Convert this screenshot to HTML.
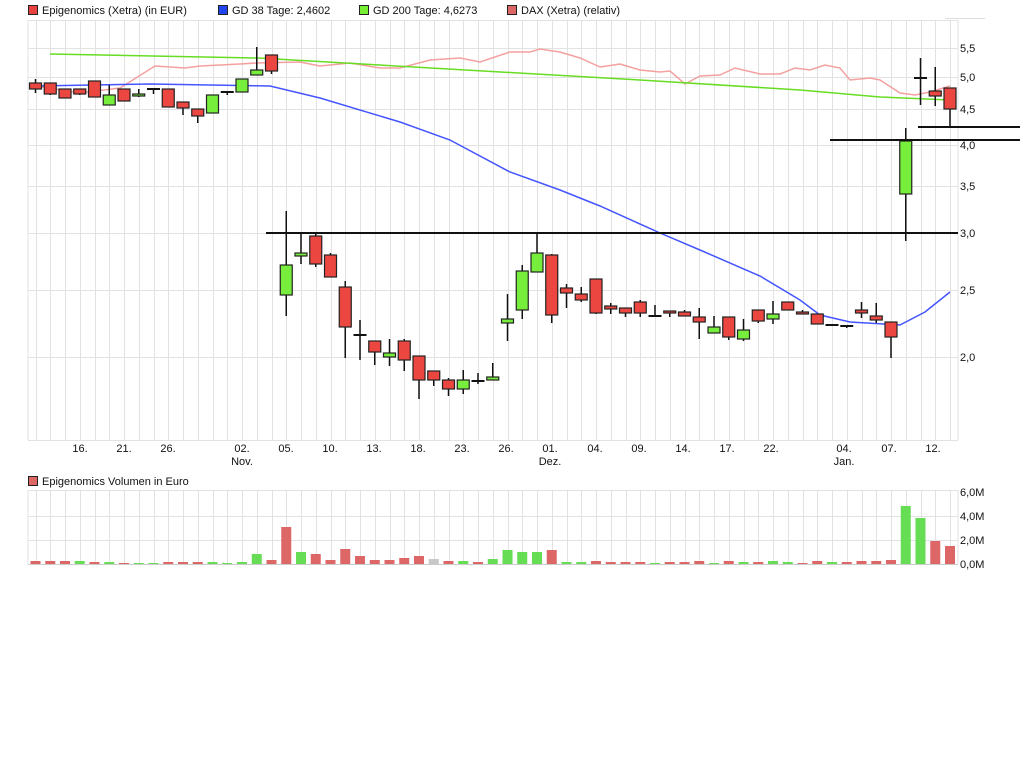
<!DOCTYPE html>
<html><head><meta charset="utf-8">
<style>
html,body{margin:0;padding:0;background:#fff;width:1024px;height:768px;overflow:hidden}
svg{display:block}
text{font-family:"Liberation Sans",sans-serif;font-size:11px;fill:#111}
</style></head><body>
<svg id="s" width="1024" height="768" xmlns="http://www.w3.org/2000/svg">
<g id="grid"></g>
<!-- legend -->
<rect x="28.5" y="5.5" width="9" height="9" fill="#e8443f" stroke="#222"/>
<text x="42" y="14">Epigenomics (Xetra) (in EUR)</text>
<rect x="218.5" y="5.5" width="9" height="9" fill="#2244ee" stroke="#222"/>
<text x="232" y="14">GD 38 Tage: 2,4602</text>
<rect x="359.5" y="5.5" width="9" height="9" fill="#77ee33" stroke="#222"/>
<text x="373" y="14">GD 200 Tage: 4,6273</text>
<rect x="507.5" y="5.5" width="9" height="9" fill="#dd6666" stroke="#222"/>
<text x="521" y="14">DAX (Xetra) (relativ)</text>
<line x1="945" y1="18.5" x2="985" y2="18.5" stroke="#ddd"/>
<!-- right axis -->
<text x="960" y="52">5,5</text><text x="960" y="81">5,0</text><text x="960" y="113">4,5</text>
<text x="960" y="149">4,0</text><text x="960" y="190">3,5</text><text x="960" y="237">3,0</text>
<text x="960" y="294">2,5</text><text x="960" y="361">2,0</text>
<!-- dates -->
<g text-anchor="middle">
<text x="80" y="452">16.</text><text x="124" y="452">21.</text><text x="168" y="452">26.</text>
<text x="242" y="452">02.</text><text x="242" y="465">Nov.</text>
<text x="286" y="452">05.</text><text x="330" y="452">10.</text><text x="374" y="452">13.</text>
<text x="418" y="452">18.</text><text x="462" y="452">23.</text><text x="506" y="452">26.</text>
<text x="550" y="452">01.</text><text x="550" y="465">Dez.</text>
<text x="595" y="452">04.</text><text x="639" y="452">09.</text><text x="683" y="452">14.</text>
<text x="727" y="452">17.</text><text x="771" y="452">22.</text>
<text x="844" y="452">04.</text><text x="844" y="465">Jan.</text>
<text x="889" y="452">07.</text><text x="933" y="452">12.</text>
</g>
<rect x="28.5" y="476.5" width="9" height="9" fill="#dd6666" stroke="#222"/>
<text x="42" y="485">Epigenomics Volumen in Euro</text>
<text x="960" y="496">6,0M</text><text x="960" y="520">4,0M</text><text x="960" y="544">2,0M</text><text x="960" y="568">0,0M</text>
<!-- MAs -->
<polyline fill="none" stroke="#f4a0a0" stroke-width="1.5" points="36,86 80,93 120,88 155,66 185,68 200,66 240,64 256,63 300,62 320,66 350,63 380,68 400,68 430,60 460,58 480,62 510,52 530,52 540,49 560,52 580,58 600,67 620,64 640,70 660,72 670,71 685,84 700,76 720,75 735,68 760,74 780,74 795,68 810,70 825,65 840,68 850,80 870,78 880,80 900,93 915,95 930,92 950,86"/>
<polyline fill="none" stroke="#66dd22" stroke-width="1.5" points="50,54 258,58 640,80 800,90 880,97 950,100"/>
<polyline fill="none" stroke="#4455ff" stroke-width="1.5" points="36,86 150,84 270,86 320,98 400,122 450,140 510,172 560,190 600,206 660,233 700,250 760,276 800,300 820,315 850,322 900,325 925,312 950,292"/>
<g id="c"></g>
<line x1="266" y1="233" x2="958" y2="233" stroke="#111" stroke-width="2"/>
<line x1="830" y1="140" x2="1020" y2="140" stroke="#111" stroke-width="2"/>
<line x1="918" y1="127" x2="1020" y2="127" stroke="#111" stroke-width="2"/>
</svg>
<script>
var NS="http://www.w3.org/2000/svg";
function el(p,t,a){var e=document.createElementNS(NS,t);for(var k in a)e.setAttribute(k,a[k]);p.appendChild(e);return e;}
var g=document.getElementById("grid"),c=document.getElementById("c");
function X(i){return 35.5+i*14.75;}
// grid
var xs=[28,958];for(var i=0;i<63;i++)xs.push(Math.round(X(i))+.5);
xs.forEach(function(x){el(g,"line",{x1:x,y1:20,x2:x,y2:440,stroke:"#e2e2e2"});el(g,"line",{x1:x,y1:490,x2:x,y2:564,stroke:"#e2e2e2"});});
[20,48,77,109,145,186,233,290,357,440].forEach(function(y){el(g,"line",{x1:28,y1:y+.5,x2:958,y2:y+.5,stroke:"#e2e2e2"});});
[490,516,540].forEach(function(y){el(g,"line",{x1:28,y1:y+.5,x2:958,y2:y+.5,stroke:"#e2e2e2"});});
el(g,"line",{x1:28,y1:564.5,x2:958,y2:564.5,stroke:"#ccc"});
// candles: [top,bottom,wickHi,wickLo,color] r/g/k
var C=[[83,89,79,93,"r"],[83,94,83,95,"r"],[89,98,89,98,"r"],[89,94,89,95,"r"],[81,97,81,97,"r"],[95,105,85,105,"g"],[89,101,89,101,"r"],[94,96,89,97,"g"],[89,89,89,94,"k"],[89,107,89,107,"r"],[102,108,102,115,"r"],[109,116,109,123,"r"],[95,113,95,113,"g"],[92,92,92,95,"k"],[79,92,79,92,"g"],[70,75,47,75,"g"],[55,71,55,74,"r"],
[265,295,211,316,"g"],[253,256,232,264,"g"],[236,264,233,267,"r"],[255,277,253,277,"r"],[287,327,281,358,"r"],[335,335,320,360,"k"],[341,352,341,365,"r"],[353,357,339,366,"g"],[341,360,339,371,"r"],[356,380,356,399,"r"],[371,380,371,386,"r"],[380,389,378,396,"r"],[380,389,370,394,"g"],[381,381,373,384,"k"],[377,380,363,380,"g"],
[319,323,294,341,"g"],[271,310,265,319,"g"],[253,272,233,272,"g"],[255,315,254,323,"r"],[288,293,284,308,"r"],[294,300,287,302,"r"],[279,313,279,314,"r"],[306,309,303,314,"r"],[308,313,308,317,"r"],[302,313,300,317,"r"],[316,316,305,316,"k"],[311,313,311,317,"r"],[312,316,310,316,"r"],[317,322,308,339,"r"],[327,333,316,333,"g"],[317,337,317,340,"r"],[330,339,319,341,"g"],[310,321,310,323,"r"],[314,319,301,324,"g"],[302,310,302,310,"r"],[312,313,310,314,"r"],[314,324,314,324,"r"],[325,325,325,326,"k"],[326,326,325,328,"k"],[310,313,302,318,"r"],[316,320,303,323,"r"],[322,337,322,358,"r"],[141,194,128,241,"g"],[78,78,58,105,"k"],[91,96,67,106,"r"],[88,109,88,127,"r"]];
C.forEach(function(d,i){var x=X(i);
el(c,"line",{x1:x,y1:d[2],x2:x,y2:d[3],stroke:"#111","stroke-width":1.5});
if(d[4]=="k"){el(c,"line",{x1:x-6.5,y1:d[0],x2:x+6.5,y2:d[0],stroke:"#111","stroke-width":2});}
else{var h=Math.max(d[1]-d[0],2);el(c,"rect",{x:x-6,y:d[0],width:12,height:h,fill:d[4]=="r"?"#ec4640":"#77ee3c",stroke:"#222","stroke-width":1.2});}
});
// volume
var V=[[3,"r"],[3,"r"],[3,"r"],[3,"g"],[2,"r"],[2,"g"],[1,"r"],[1,"g"],[1,"g"],[2,"r"],[2,"r"],[2,"r"],[2,"g"],[1,"g"],[2,"g"],[10,"g"],[4,"r"],[37,"r"],[12,"g"],[10,"r"],[4,"r"],[15,"r"],[8,"r"],[4,"r"],[4,"r"],[6,"r"],[8,"r"],[5,"x"],[3,"r"],[3,"g"],[2,"r"],[5,"g"],[14,"g"],[12,"g"],[12,"g"],[14,"r"],[2,"g"],[2,"g"],[3,"r"],[2,"r"],[2,"r"],[2,"r"],[1,"g"],[2,"r"],[2,"r"],[3,"r"],[1,"g"],[3,"r"],[2,"g"],[2,"r"],[3,"g"],[2,"g"],[1,"r"],[3,"r"],[2,"g"],[2,"r"],[3,"r"],[3,"r"],[4,"r"],[58,"g"],[46,"g"],[23,"r"],[18,"r"]];
V.forEach(function(d,i){var x=X(i);el(c,"rect",{x:x-5,y:564-d[0],width:10,height:d[0],fill:d[1]=="r"?"#dd6666":d[1]=="g"?"#66dd55":"#c8c8c8"});});
</script>
</body></html>
